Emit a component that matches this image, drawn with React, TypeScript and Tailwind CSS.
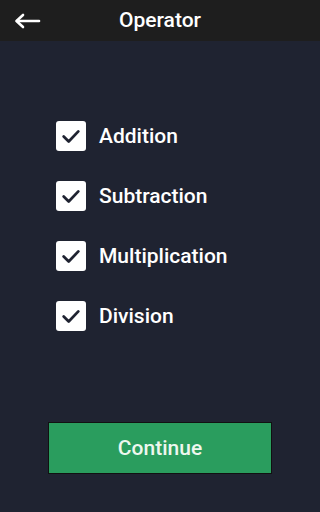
import React, { useState } from 'react';

const operators = ['Addition', 'Subtraction', 'Multiplication', 'Division'];

const App: React.FC = () => {
  const [checked, setChecked] = useState<boolean[]>([true, true, true, true]);

  const toggle = (idx: number) => {
    setChecked(checked.map((c, i) => (i === idx ? !c : c)));
  };

  return (
    <div className="w-[320px] h-[512px] flex flex-col bg-[#1f2331] font-['Roboto',sans-serif]">
      {/* Header */}
      <div className="h-[41px] bg-[#1e1e1e] flex items-center relative shrink-0">
        <button className="ml-[14px] text-white">
          <svg width="27" height="16" viewBox="0 0 27 16" fill="none" stroke="white" strokeWidth="2.6" strokeLinecap="round" strokeLinejoin="round">
            <path d="M25 8H3" />
            <path d="M9 2L2.5 8L9 14" />
          </svg>
        </button>
        <h1 className="absolute left-0 right-0 text-center text-white text-[21px] font-medium pointer-events-none">Operator</h1>
      </div>

      {/* Options */}
      <div className="flex flex-col gap-[30px] pl-[56px] pt-[80px]">
        {operators.map((op, idx) => (
          <label key={op} className="flex items-center gap-[13px] h-[30px] cursor-pointer" onClick={() => toggle(idx)}>
            <span className="w-[30px] h-[30px] rounded-[3px] bg-white flex items-center justify-center">
              {checked[idx] && (
                <svg width="22" height="22" viewBox="0 0 24 24" fill="none" stroke="#1f2331" strokeWidth="3" strokeLinecap="round" strokeLinejoin="round">
                  <path d="M4 12.5L9.5 18L20 7" />
                </svg>
              )}
            </span>
            <span className="text-white text-[21px] font-medium mt-[2px]">{op}</span>
          </label>
        ))}
      </div>

      {/* Continue */}
      <div className="mt-auto mb-[38px] px-[48px]">
        <button className="w-full h-[52px] pt-[2px] bg-[#2a9d5e] border border-[#111] text-[#eef7ee] text-[21px] font-medium">
          Continue
        </button>
      </div>
    </div>
  );
};

export default App;
